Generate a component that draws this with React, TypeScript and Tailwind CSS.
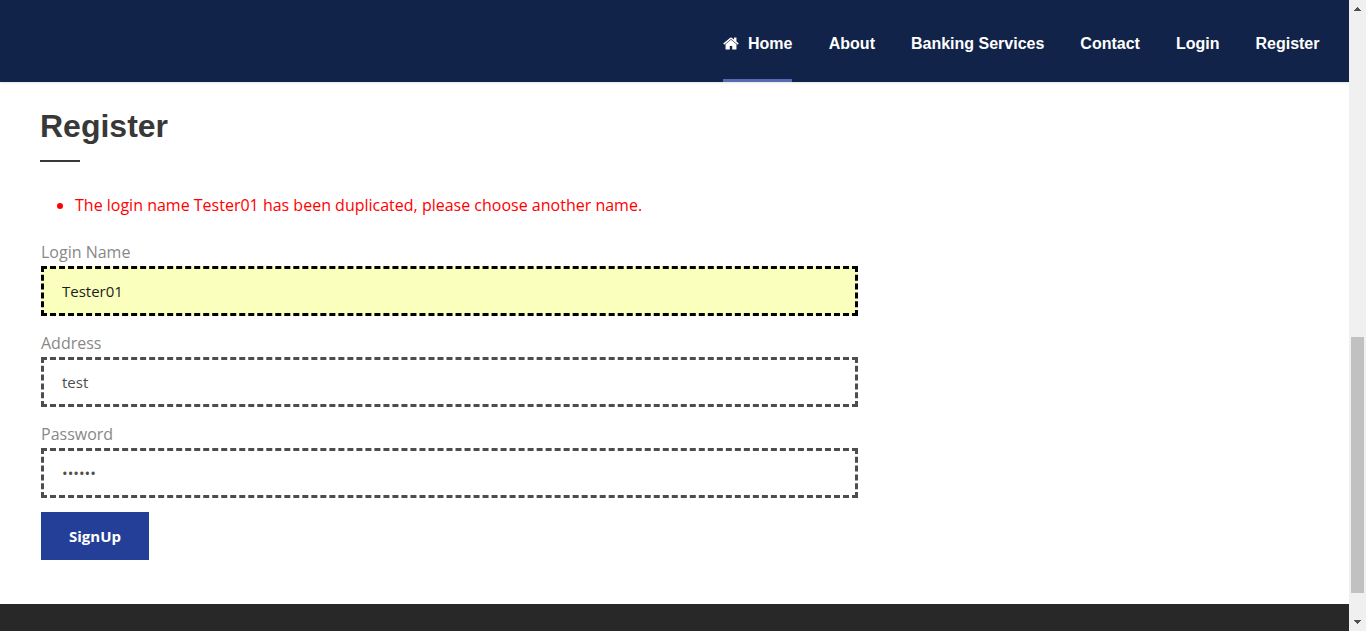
import React from "react";

const links = ["About", "Banking Services", "Contact", "Login", "Register"];

function HomeIcon() {
  return (
    <svg className="mr-[9px] h-[17px] w-4 shrink-0" viewBox="0 0 1664 1792" fill="currentColor" aria-hidden="true">
      <path d="M1408 992v480q0 26-19 45t-45 19h-384v-384h-256v384h-384q-26 0-45-19t-19-45v-480q0-1 .5-3t.5-3l575-474 575 474q1 2 1 6zm223-69l-62 74q-8 9-21 11h-3q-13 0-21-7l-692-577-692 577q-12 8-24 7-13-2-21-11l-62-74q-8-10-7-23.5t11-21.5l719-599q32-26 76-26t76 26l244 204v-195q0-14 9-23t23-9h192q14 0 23 9t9 23v408l219 182q10 8 11 21.5t-7 23.5z" />
    </svg>
  );
}

function Navigation() {
  return (
    <header className="h-[82px] shrink-0 bg-[#122349] pr-[29.5px] shadow-[0_0_3px_rgba(0,0,0,0.2)]">
      <nav className="flex h-full justify-end gap-[36px] font-['Liberation_Sans',Arial,sans-serif] text-base leading-6 font-bold text-white">
        <a href="#home" className="mr-[0.3px] flex h-full items-center border-b-[3px] border-[#556cb5] pt-2">
          <HomeIcon />
          Home
        </a>
        {links.map((label) => (
          <a key={label} href="#" className="flex h-full items-center pt-[5px]">
            {label}
          </a>
        ))}
      </nav>
    </header>
  );
}

type FieldProps = { label: string; value: string; type?: string; filled?: boolean };

function Field({ label, value, type = "text", filled = false }: FieldProps) {
  return (
    <label className="mb-[15px] flex h-[76px] w-[817px] flex-col">
      <span className="h-[26px] text-base leading-6 text-[#888888]">{label}</span>
      <input
        type={type}
        defaultValue={value}
        className={
          "h-[50px] w-full border-[3px] border-dashed px-[18px] text-[15px] outline-none " +
          (filled ? "border-black bg-[#faffbd] text-[#1c1c1c]" : "border-[#4d4d4d] bg-white text-[#4d4d4d]")
        }
      />
    </label>
  );
}

function Scrollbar() {
  return (
    <aside className="flex w-[17px] shrink-0 flex-col items-center bg-[#f0f0f0]">
      <svg className="h-[17px] w-[17px] shrink-0" viewBox="0 0 17 17" fill="#505050" shapeRendering="crispEdges">
        <path d="M8 7h1v1h1v1h1v1h1v1H5v-1h1V9h1V8h1z" />
      </svg>
      <div className="mt-[320px] h-[256px] w-[13px] shrink-0 bg-[#c1c1c1]" />
      <svg className="mt-auto h-[17px] w-[17px] shrink-0" viewBox="0 0 17 17" fill="#505050" shapeRendering="crispEdges">
        <path d="M5 6h7v1h-1v1h-1v1H9v1H8V9H7V8H6V7H5z" />
      </svg>
    </aside>
  );
}

export default function App() {
  return (
    <div className="flex h-[631px] w-full overflow-hidden bg-white font-['Open_Sans',sans-serif]">
      <div className="flex min-w-0 flex-1 flex-col">
        <Navigation />
        <main className="flex-1 pt-6 pl-10">
          <h1 className="h-10 font-['Liberation_Sans',Arial,sans-serif] text-[32px] leading-10 font-bold text-[#383838]">
            Register
          </h1>
          <div className="mt-[14px] h-[2px] w-10 bg-[#383838]" />
          <ul className="mt-[30px] list-disc pl-[35px] text-base leading-[26px] text-[#ff0000]">
            <li>The login name Tester01 has been duplicated, please choose another name.</li>
          </ul>
          <form className="mt-[22px] pl-px" onSubmit={(event) => event.preventDefault()}>
            <Field label="Login Name" value="Tester01" filled />
            <Field label="Address" value="test" />
            <Field label="Password" value="secret" type="password" />
            <button type="submit" className="-mt-px block h-12 w-[108px] bg-[#243f97] text-[15px] font-bold text-white">
              SignUp
            </button>
          </form>
        </main>
        <footer className="h-[27px] shrink-0 bg-[#282828]" />
      </div>
      <Scrollbar />
    </div>
  );
}
